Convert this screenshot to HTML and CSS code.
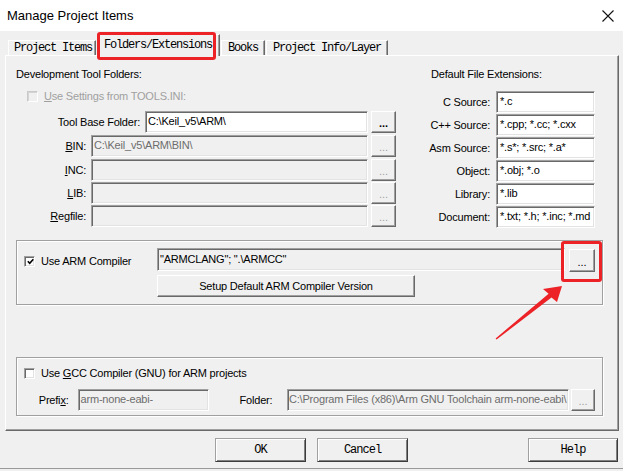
FILE: index.html
```html
<!DOCTYPE html>
<html>
<head>
<meta charset="utf-8">
<title>Manage Project Items</title>
<link rel="stylesheet" href="styles.css">
</head>
<body>
<div class="window">
  <header class="titlebar">
    <span class="title">Manage Project Items</span>
    <svg class="close" width="12" height="12" viewBox="0 0 12 12"><path d="M0.5 0.5 L11.5 11.5 M11.5 0.5 L0.5 11.5" stroke="#111" stroke-width="1.1" fill="none"/></svg>
  </header>

  <nav class="tabs">
    <span class="tab t1">Project Items</span>
    <span class="tab active">Folders/Extensions</span>
    <span class="tab">Books</span>
    <span class="tab">Project Info/Layer</span>
  </nav>

  <section class="panel">
    <div class="top">
      <div class="col">
        <div class="heading">Development Tool Folders:</div>
        <div class="check disabled"><span class="box"></span><span><u>U</u>se Settings from TOOLS.INI:</span></div>
        <div class="row first"><span class="lbl">Tool Base Folder:</span><span class="field base">C:\Keil_v5\ARM\</span><span class="btn dots on">...</span></div>
        <div class="row"><span class="lbl"><u>B</u>IN:</span><span class="field wide off">C:\Keil_v5\ARM\BIN\</span><span class="btn dots">...</span></div>
        <div class="row"><span class="lbl"><u>I</u>NC:</span><span class="field wide off"></span><span class="btn dots">...</span></div>
        <div class="row tight"><span class="lbl"><u>L</u>IB:</span><span class="field wide off"></span><span class="btn dots">...</span></div>
        <div class="row tight"><span class="lbl"><u>R</u>egfile:</span><span class="field wide off"></span><span class="btn dots">...</span></div>
      </div>
      <div class="col">
        <div class="heading">Default File Extensions:</div>
        <div class="erow first"><span class="lbl">C Source:</span><span class="field ext">*.c</span></div>
        <div class="erow"><span class="lbl">C++ Source:</span><span class="field ext">*.cpp; *.cc; *.cxx</span></div>
        <div class="erow"><span class="lbl">Asm Source:</span><span class="field ext">*.s*; *.src; *.a*</span></div>
        <div class="erow"><span class="lbl">Object:</span><span class="field ext">*.obj; *.o</span></div>
        <div class="erow"><span class="lbl">Library:</span><span class="field ext">*.lib</span></div>
        <div class="erow"><span class="lbl">Document:</span><span class="field ext">*.txt; *.h; *.inc; *.md</span></div>
      </div>
    </div>

    <div class="group arm">
      <div class="check"><span class="box"><svg width="7" height="7" viewBox="0 0 7 7"><path d="M0.8 3.2 L2.7 5.2 L6.3 1.2" stroke="#000" stroke-width="1.6" fill="none"/></svg></span><span>Use ARM Compiler</span></div>
      <div class="armline"><span class="field compiler">"ARMCLANG"; ".\ARMCC"</span><span class="btn dots small">...</span></div>
      <span class="btn setup">Setup Default ARM Compiler Version</span>
    </div>

    <div class="group gcc">
      <div class="check"><span class="box"></span><span>Use <u>G</u>CC Compiler (GNU) for ARM projects</span></div>
      <div class="gccline">
        <span class="plbl">Prefi<u>x</u>:</span>
        <span class="field prefix off">arm-none-eabi-</span>
        <span class="flbl">Folder:</span>
        <span class="field folder off">C:\Program Files (x86)\Arm GNU Toolchain arm-none-eabi\</span>
        <span class="btn dots fbtn">...</span>
      </div>
    </div>
  </section>

  <footer class="buttons">
    <span class="btn pb ok">OK</span>
    <span class="btn pb cancel">Cancel</span>
    <span class="btn pb help">Help</span>
  </footer>
  <div class="bottomline"></div>
</div>

<div class="mark mark-tab"></div>
<div class="mark mark-btn"></div>
<svg class="arrow" width="623" height="471" viewBox="0 0 623 471">
  <polygon points="562,286 557,302 551.5,297.5 496.6,339.6 495.6,338.4 548.6,293.8 543,289" fill="#ec2227"/>
</svg>
</body>
</html>
```

FILE: styles.css
```css
html, body {
  margin: 0;
  padding: 0;
}
body {
  width: 623px;
  height: 471px;
  overflow: hidden;
  position: relative;
  background: #f0f0f0;
  color: #000;
  font-family: "Liberation Sans", Arial, sans-serif;
  font-size: 11px;
  letter-spacing: -0.2px;
}
u { text-decoration: underline; text-underline-offset: 1px; }

.titlebar {
  height: 31px;
  background: #fff;
  display: flex;
  align-items: center;
  justify-content: space-between;
  padding: 0 9px 0 7px;
  box-sizing: border-box;
  letter-spacing: 0;
}
.title {
  font-family: "Liberation Sans", Arial, sans-serif;
  font-size: 13px;
}

.tabs {
  height: 24px;
  display: flex;
  align-items: flex-end;
  gap: 1px;
  padding-left: 8px;
  position: relative;
  z-index: 2;
}
.tab {
  height: 15px;
  box-sizing: border-box;
  padding: 0 6px 0 6px;
  border-top: 1px solid #fff;
  border-left: 1px solid #fff;
  border-right: 1px solid #696969;
  box-shadow: inset -1px 0 #a0a0a0;
  font-family: "Liberation Mono", "DejaVu Sans Mono", monospace;
  font-size: 12px;
  letter-spacing: -1.2px;
  line-height: 14px;
  background: #f0f0f0;
  white-space: nowrap;
}
.tab.t1 { padding: 0 3px 0 5px; }
.tab.active {
  height: 22px;
  margin-bottom: -1px;
  padding: 3px 7px 0 6px;
}

.panel {
  margin-left: 5px;
  width: 614px;
  height: 376px;
  box-sizing: border-box;
  border-top: 1px solid #fff;
  border-left: 1px solid #fff;
  border-right: 1px solid #696969;
  border-bottom: 1px solid #696969;
  box-shadow: inset -1px -1px #a0a0a0;
  padding: 11px 0 0 10px;
}

.top {
  display: grid;
  grid-template-columns: 380px 164px;
  column-gap: 35px;
}
.heading {
  height: 14px;
  line-height: 14px;
  white-space: nowrap;
}

.check {
  display: flex;
  align-items: center;
  gap: 6px;
  height: 14px;
  line-height: 14px;
  white-space: nowrap;
}
.col > .check {
  margin-top: 8px;
  padding-left: 11px;
}
.box {
  width: 11px;
  height: 11px;
  box-sizing: border-box;
  background: #fff;
  border-top: 1px solid #a0a0a0;
  border-left: 1px solid #a0a0a0;
  border-right: 1px solid #fff;
  border-bottom: 1px solid #fff;
  box-shadow: inset 1px 1px #696969, inset -1px -1px #e3e3e3;
  display: flex;
  align-items: center;
  justify-content: center;
  flex: none;
}
.box svg { margin: 1px 0 0 1px; }
.check.disabled { color: #a0a0a0; }
.check.disabled .box {
  background: #f0f0f0;
  border-color: #c9c9c9 #fff #fff #c9c9c9;
  box-shadow: inset 1px 1px #d4d4d4;
}

.row, .erow {
  display: flex;
  align-items: center;
  justify-content: flex-end;
  height: 22px;
  margin-top: 2px;
}
.lbl { white-space: nowrap; }
.row.first { margin-top: 8px; }
.row.tight { margin-top: 1px; }
.row .lbl { margin-right: 5px; }
.erow { margin-top: 1px; }
.erow.first { margin-top: 10px; }
.erow .lbl { margin-right: 6px; }

.field {
  display: block;
  flex: none;
  height: 22px;
  box-sizing: border-box;
  background: #fff;
  border-top: 1px solid #a0a0a0;
  border-left: 1px solid #a0a0a0;
  border-right: 1px solid #fff;
  border-bottom: 1px solid #fff;
  box-shadow: inset 1px 1px #696969, inset -1px -1px #e3e3e3;
  padding: 0 2px 0 2px;
  line-height: 19px;
  white-space: nowrap;
  overflow: hidden;
}
.field.off {
  background: #f0f0f0;
  color: #6d6d6d;
}
.field.base { width: 223px; }
.field.wide { width: 277px; }
.field.ext { width: 99px; padding-left: 3px; }

.btn {
  display: flex;
  align-items: center;
  justify-content: center;
  box-sizing: border-box;
  flex: none;
  background: #f0f0f0;
  border-top: 1px solid #fff;
  border-left: 1px solid #fff;
  border-right: 1px solid #696969;
  border-bottom: 1px solid #696969;
  box-shadow: inset -1px -1px #a0a0a0;
  white-space: nowrap;
}
.dots {
  width: 25px;
  height: 22px;
  margin-left: 3px;
  color: #a0a0a0;
  padding-top: 2px;
  letter-spacing: 0;
}
.dots.on { color: #000; font-weight: bold; }

.group {
  width: 587px;
  box-sizing: border-box;
  border: 1px solid #a0a0a0;
  box-shadow: inset 1px 1px #fff, 1px 1px #fff;
}
.group.arm {
  margin-top: 12px;
  display: grid;
  grid-template-columns: 133px 1fr;
  row-gap: 4px;
  padding: 7px 7px 7px 7px;
}
.group.arm .check { align-self: center; padding-top: 3px; }
.armline {
  display: flex;
  height: 23px;
  align-items: flex-start;
}
.field.compiler {
  flex: 1;
  height: 23px;
  line-height: 20px;
  background: #f0f0f0;
  color: #000;
  padding-left: 2px;
}
.dots.small {
  width: 26px;
  height: 23px;
  margin-left: 4px;
  margin-top: 1px;
  color: #000;
}
.btn.setup {
  grid-column: 2;
  width: 258px;
  height: 22px;
}

.group.gcc {
  margin-top: 52px;
  padding: 8px 7px 4px 7px;
}
.gccline {
  display: flex;
  align-items: center;
  height: 22px;
  margin-top: 9px;
}
.plbl {
  width: 46px;
  text-align: right;
  margin-right: 9px;
}
.field.prefix { width: 131px; }
.flbl {
  width: 49px;
  margin-left: 31px;
}
.field.folder { width: 282px; padding-left: 1px; }
.dots.fbtn {
  width: 24px;
  margin-left: 2px;
}

.buttons {
  display: flex;
  height: 24px;
  margin-top: 7px;
  padding-left: 215px;
}
.pb {
  width: 91px;
  height: 24px;
  border-color: #a0a0a0 #3c3c3c #3c3c3c #a0a0a0;
  box-shadow: inset 1px 1px #fff, inset -1px -1px #808080;
  font-family: "Liberation Mono", "DejaVu Sans Mono", monospace;
  font-size: 12px;
  letter-spacing: -1px;
}
.pb.cancel { margin-left: 11px; }
.pb.help { margin-left: 120px; width: 90px; }

.bottomline {
  margin-top: 6px;
  height: 1px;
  background: #9a9a9a;
}

.mark {
  position: absolute;
  box-sizing: border-box;
  border: 3px solid #ec2227;
  border-radius: 3px;
  pointer-events: none;
  z-index: 5;
}
.mark-tab { left: 97px; top: 32px; width: 119px; height: 28px; }
.mark-btn { left: 561px; top: 241px; width: 41px; height: 41px; }
.arrow {
  position: absolute;
  left: 0;
  top: 0;
  pointer-events: none;
  z-index: 5;
}
```
